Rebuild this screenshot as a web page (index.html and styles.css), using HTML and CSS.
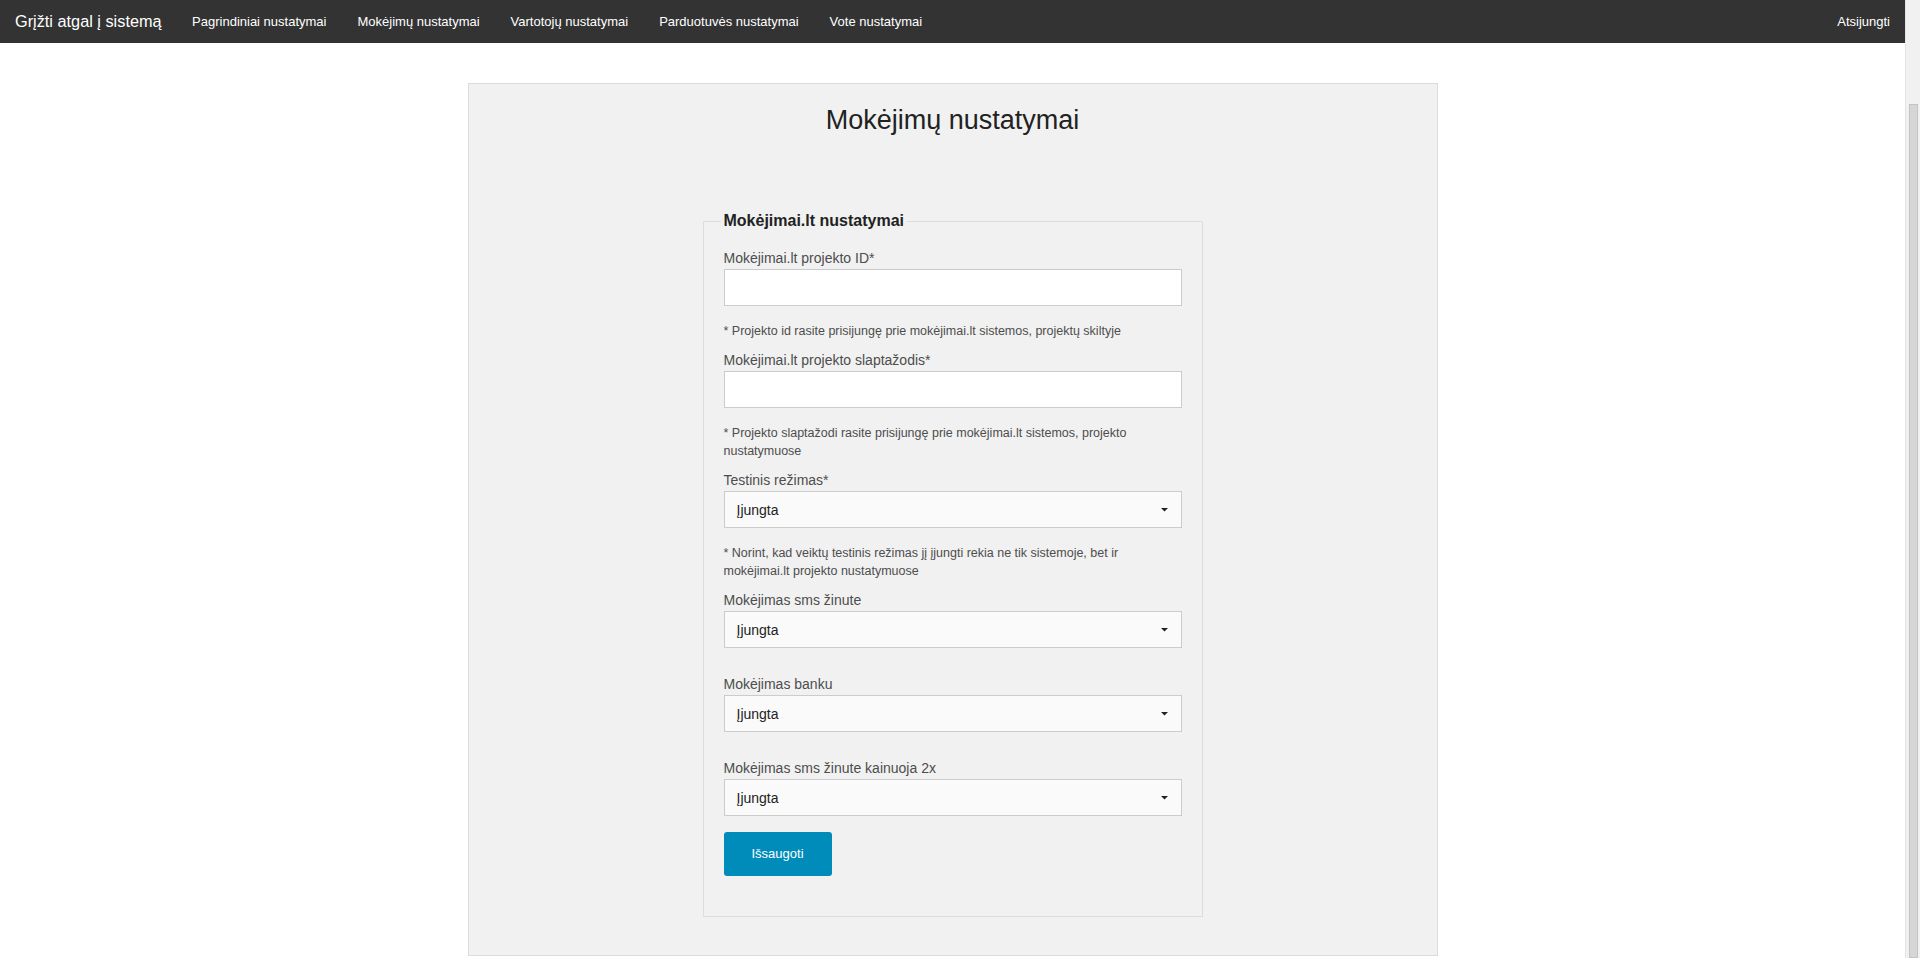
FILE: index.html
```html
<!DOCTYPE html>
<html lang="lt">
<head>
<meta charset="utf-8">
<title>Mokėjimų nustatymai</title>
<link rel="stylesheet" href="styles.css">
</head>
<body>
<div class="page">
  <div class="viewport">
    <nav class="topbar">
      <a class="brand" href="#">Grįžti atgal į sistemą</a>
      <ul class="menu">
        <li><a href="#">Pagrindiniai nustatymai</a></li>
        <li><a href="#">Mokėjimų nustatymai</a></li>
        <li><a href="#">Vartotojų nustatymai</a></li>
        <li><a href="#">Parduotuvės nustatymai</a></li>
        <li><a href="#">Vote nustatymai</a></li>
      </ul>
      <ul class="menu menu-right">
        <li><a href="#">Atsijungti</a></li>
      </ul>
    </nav>

    <main class="card">
      <h1 class="card-title">Mokėjimų nustatymai</h1>
      <form class="settings">
        <fieldset class="group">
          <legend>Mokėjimai.lt nustatymai</legend>

          <div class="field field-help">
            <label class="label">Mokėjimai.lt projekto ID*</label>
            <input class="input" type="text">
            <p class="help">* Projekto id rasite prisijungę prie mokėjimai.lt sistemos, projektų skiltyje</p>
          </div>

          <div class="field field-help">
            <label class="label">Mokėjimai.lt projekto slaptažodis*</label>
            <input class="input" type="text">
            <p class="help">* Projekto slaptažodi rasite prisijungę prie mokėjimai.lt sistemos, projekto nustatymuose</p>
          </div>

          <div class="field field-help">
            <label class="label">Testinis režimas*</label>
            <div class="select"><span>Įjungta</span><svg class="caret" width="7" height="4" viewBox="0 0 7 4"><polygon points="0,0 7,0 3.5,3.5" fill="#222"/></svg></div>
            <p class="help">* Norint, kad veiktų testinis režimas jį įjungti rekia ne tik sistemoje, bet ir mokėjimai.lt projekto nustatymuose</p>
          </div>

          <div class="field">
            <label class="label">Mokėjimas sms žinute</label>
            <div class="select"><span>Įjungta</span><svg class="caret" width="7" height="4" viewBox="0 0 7 4"><polygon points="0,0 7,0 3.5,3.5" fill="#222"/></svg></div>
          </div>

          <div class="field">
            <label class="label">Mokėjimas banku</label>
            <div class="select"><span>Įjungta</span><svg class="caret" width="7" height="4" viewBox="0 0 7 4"><polygon points="0,0 7,0 3.5,3.5" fill="#222"/></svg></div>
          </div>

          <div class="field field-last">
            <label class="label">Mokėjimas sms žinute kainuoja 2x</label>
            <div class="select"><span>Įjungta</span><svg class="caret" width="7" height="4" viewBox="0 0 7 4"><polygon points="0,0 7,0 3.5,3.5" fill="#222"/></svg></div>
          </div>

          <button class="button" type="button">Išsaugoti</button>
        </fieldset>
      </form>
    </main>
  </div>
  <div class="scrollbar"><div class="thumb"></div></div>
</div>
</body>
</html>
```

FILE: styles.css
```css
* {
  box-sizing: border-box;
}

html, body {
  margin: 0;
  padding: 0;
  background: #fff;
}

body {
  font-family: "Liberation Sans", Arial, sans-serif;
  color: #222;
}

.page {
  display: flex;
  height: 958px;
  overflow: hidden;
}

.viewport {
  flex: 1;
  min-width: 0;
}

/* Top bar */
.topbar {
  display: flex;
  align-items: stretch;
  height: 43px;
  background: #333;
}

.brand {
  display: block;
  padding: 0 15px;
  line-height: 43px;
  font-size: 16.3px;
  color: #fff;
  text-decoration: none;
}

.menu {
  display: flex;
  margin: 0;
  padding: 0;
  list-style: none;
}

.menu-right {
  margin-left: auto;
}

.menu a {
  display: block;
  padding: 0 15.5px;
  line-height: 43px;
  font-size: 13px;
  color: #fff;
  text-decoration: none;
}

.menu-right a {
  padding-right: 15px;
}

/* Card */
.card {
  width: 970px;
  margin: 40px auto 0;
  padding: 20px;
  background: #f1f1f1;
  border: 1px solid #dcdcdc;
}

.card-title {
  margin: 0 0 75px;
  font-size: 27px;
  line-height: 33px;
  font-weight: normal;
  text-align: center;
  color: #222;
}

.settings {
  margin: 0;
}

.group {
  width: 500px;
  margin: 0 auto 18px;
  padding: 22px 20px 20px;
  border: 1px solid #ddd;
  min-width: 0;
}

.group legend {
  padding: 0 3px;
  margin-left: -3px;
  font-size: 16px;
  font-weight: bold;
  color: #222;
}

.field {
  margin-bottom: 30px;
}

.field-help {
  margin-bottom: 14px;
}

.field-last {
  margin-bottom: 16px;
}

.label {
  display: block;
  margin-bottom: 5px;
  font-size: 14px;
  line-height: 12px;
  color: #4d4d4d;
}

.input {
  display: block;
  width: 100%;
  height: 37px;
  margin: 0;
  padding: 8px;
  border: 1px solid #ccc;
  background: #fff;
  font-family: inherit;
  font-size: 14px;
  color: rgba(0, 0, 0, 0.75);
  outline: none;
}

.select {
  display: flex;
  align-items: center;
  justify-content: space-between;
  height: 37px;
  padding: 0 13px 0 12px;
  border: 1px solid #ccc;
  background: #fafafa;
  font-size: 14px;
  color: #222;
}

.caret {
  display: block;
  margin-top: 1px;
}

.help {
  margin: 16px 0 0;
  font-size: 12.5px;
  line-height: 18px;
  color: #4d4d4d;
}

.button {
  display: block;
  height: 44px;
  margin: 0 0 20px;
  padding: 0 28px;
  border: 0;
  border-radius: 3px;
  background: #008cba;
  color: #fff;
  font-family: inherit;
  font-size: 13px;
  line-height: 44px;
}

/* Window scrollbar */
.scrollbar {
  width: 15px;
  flex: none;
  background: #f1f1f1;
  border-left: 1px solid #e4e4e4;
  padding: 104px 2px 0 3px;
}

.thumb {
  height: 100%;
  background: #d6d6d6;
  border: 1px solid #c3c3c3;
}
```
